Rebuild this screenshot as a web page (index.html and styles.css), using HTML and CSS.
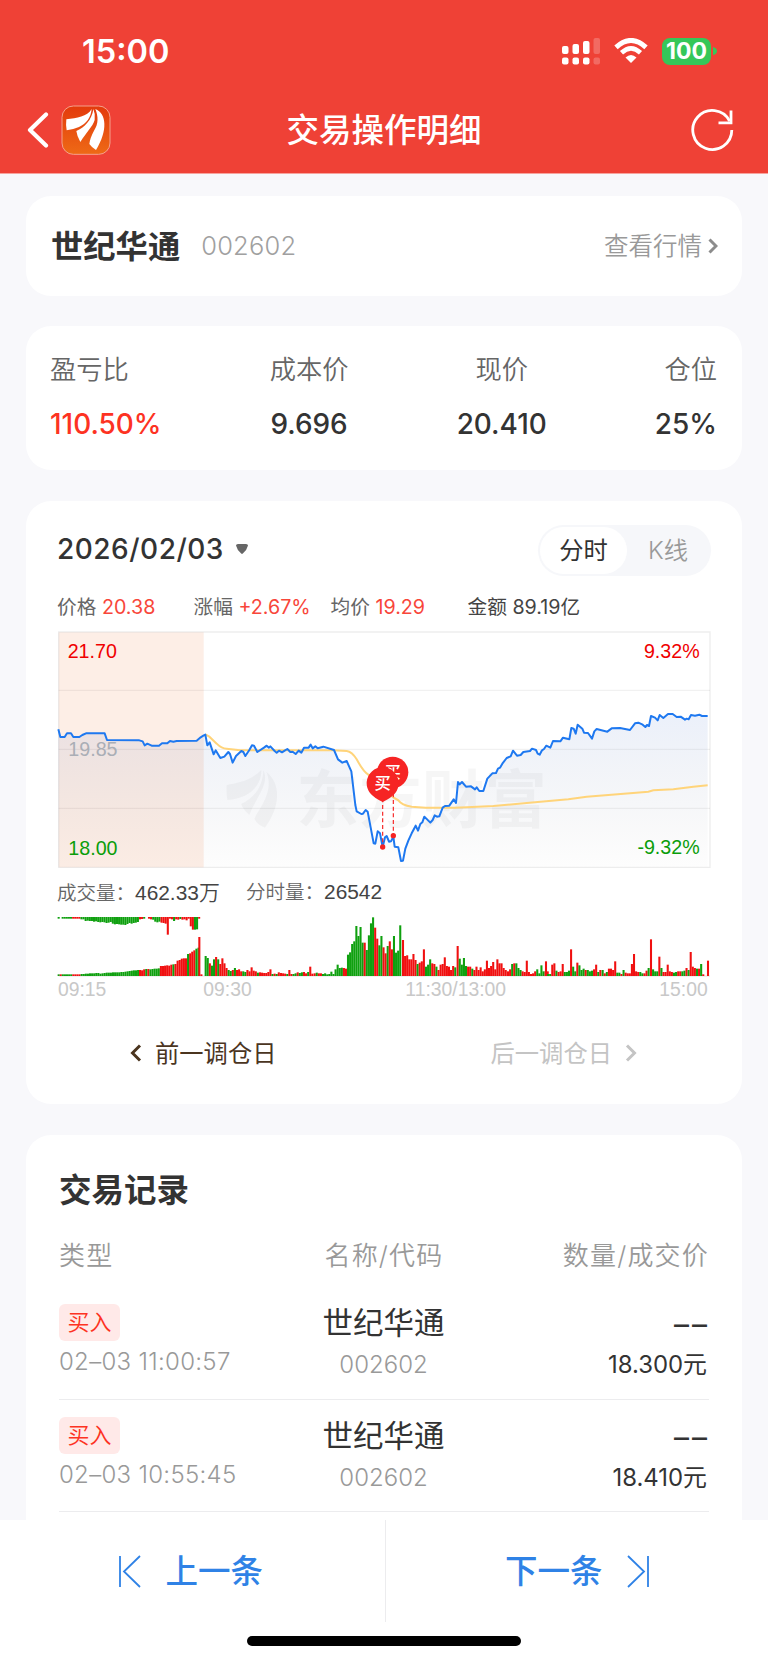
FILE: index.html
```html
<!DOCTYPE html>
<html lang="zh-CN">
<head>
<meta charset="utf-8">
<title>交易操作明细</title>
<link rel="stylesheet" href="styles.css">
</head>

<body>
<div class="header">
	<div class="status">
		<span class="time">15:00</span>
		<svg class="signal" width="39" height="28" viewBox="0 0 39 28" fill="#fff">
			<rect x="0" y="9" width="6.5" height="8" rx="2"/>
			<rect x="10.5" y="7" width="6.5" height="10" rx="2"/>
			<rect x="21" y="4" width="6.5" height="13" rx="2"/>
			<rect x="31.5" y="1" width="6.5" height="16" rx="2" opacity=".22"/>
			<rect x="0" y="20.5" width="6.5" height="7" rx="2"/>
			<rect x="10.5" y="20.5" width="6.5" height="7" rx="2"/>
			<rect x="21" y="20.5" width="6.5" height="7" rx="2"/>
			<rect x="31.5" y="20.5" width="6.5" height="7" rx="2" opacity=".22"/>
		</svg>
		<svg class="wifi" width="34" height="26" viewBox="0 0 34 26">
			<path d="M2 9.3Q17 -4.3 32 9.3" fill="none" stroke="#fff" stroke-width="5"/>
			<path d="M7.5 14.8Q17 6 26.500 14.800" fill="none" stroke="#fff" stroke-width="4.600"/>
			<path d="M11.500 19.500Q17 14.500 22.500 19.500L17 25Z" fill="#fff"/>
		</svg>
		<span class="battery">100</span>
		<svg class="battery-cap" width="4" height="8" viewBox="0 0 4 8"><path d="M0 0Q4 1 4 4T0 8Z" fill="#35c759"/></svg>
	</div>
	<div class="navbar">
		<svg class="back" width="22" height="36" viewBox="0 0 22 36"><path d="M19 2.500L3 18L19 33.500" fill="none" stroke="#fff" stroke-width="4.200" stroke-linecap="round" stroke-linejoin="round"/></svg>
		<svg class="app-icon" width="50" height="50" viewBox="0 0 150 150">
			<defs><linearGradient id="app" x1="0" y1="0" x2="0" y2="1"><stop offset="0" stop-color="#e33a0c"/><stop offset="1" stop-color="#ee6a16"/></linearGradient></defs>
			<rect x="3" y="3" width="144" height="145" rx="34" fill="url(#app)" stroke="#f5a08c" stroke-width="3"/>
			<g fill="#fff">
				<path d="M92 12C78 36 48 38 16 43Q14 60 17 76Q38 73 54 66C76 56 90 38 92 12Z"/>
				<path d="M97 12Q104 28 101 45C95 65 76 82 58 111Q48 94 46 78C70 68 93 45 97 12Z"/>
				<path d="M103 12C137 25 141 77 105 135Q92 127 85 117Q87 99 99 77C113 57 112 34 103 12Z"/>
			</g>
		</svg>
		<h1>交易操作明细</h1>
		<svg class="refresh" width="44" height="44" viewBox="0 0 44 44" fill="none" stroke="#fff" stroke-width="2.800">
			<path d="M41.800 22A19.500 19.500 0 1 1 39.600 13"/>
			<path d="M41 2.500V14.800H28.500"/>
		</svg>
	</div>
</div>

<div class="card stock">
	<h2>世纪华通</h2>
	<span class="code">002602</span>
	<a class="quote">查看行情</a>
	<svg width="10" height="16" viewBox="0 0 10 16"><path d="M1.500 1.500L8 8L1.500 14.500" fill="none" stroke="#8c8c8c" stroke-width="3"/></svg>
</div>

<div class="card summary">
	<div class="item left"><span>盈亏比</span><b class="up">110.50%</b></div>
	<div class="item cost"><span>成本价</span><b>9.696</b></div>
	<div class="item price"><span>现价</span><b>20.410</b></div>
	<div class="item right"><span>仓位</span><b>25%</b></div>
</div>

<div class="card chart">
	<div class="chart-head">
		<span class="date">2026/02/03</span>
		<svg width="14" height="11" viewBox="0 0 14 11"><path d="M1 1.500Q1 0 3 0H11Q13 0 13 1.500Q12 6 7.800 9.500Q7 10.300 6.200 9.500Q2 6 1 1.500Z" fill="#666"/></svg>
		<div class="tabs">
			<span class="tab on">分时</span>
			<span class="tab">K线</span>
		</div>
	</div>
	<div class="info">
		<span>价格 <i>20.38</i></span>
		<span>涨幅 <i>+2.67%</i></span>
		<span>均价 <i>19.29</i></span>
		<span class="dark">金额 89.19亿</span>
	</div>

	<!-- 分时走势 -->
	<svg class="trend" width="654" height="240" viewBox="51 30 1962 720">
		<defs>
			<linearGradient id="fill" x1="0" y1="0" x2="0" y2="1">
				<stop offset="0" stop-color="#3969d2" stop-opacity=".1"/>
				<stop offset="1" stop-color="#444" stop-opacity=".01"/>
			</linearGradient>
		</defs>
		<rect x="56" y="37" width="435" height="705" fill="#fdeee6"/>
		<g class="grid">
			<path d="M56 211H2010M56 388H2010M56 565H2010"/>
			<path class="frame" d="M56 36H2010V742H56Z"/>
		</g>
		<g class="watermark">
			<path d="M560 495C590 488 630 485 664 449C666 490 635 535 562 540Q558 515 560 495Z"/>
			<path d="M670 451C690 490 650 530 628 585Q610 570 603 552C640 535 667 505 670 451Z"/>
			<path d="M679 455C724 490 722 560 675 623Q652 615 643 596C660 560 703 515 679 455Z"/>
			<text x="769" y="605">东方财富</text>
		</g>
		<polygon id="area" fill="url(#fill)"/>
		<path class="avg" d="M496 343L508 350L530 371Q545 386 560 386L600 391H880L920 393Q936 395 950 418Q970 455 985 464L1060 532L1075 541Q1085 555 1115 560Q1180 566 1280 562L1360 558L1460 549L1585 538L1640 530L1770 520L1825 515L1840 511L1900 508L1960 500L2003 496"/>
		<polyline id="line"/>
		<text class="t-red" x="83" y="113">21.70</text>
		<text class="t-gray" x="85" y="407">19.85</text>
		<text class="t-green" x="85" y="704">18.00</text>
		<text class="t-red end" x="1979" y="114">9.32%</text>
		<text class="t-green end" x="1979" y="702">-9.32%</text>
		<!-- 买点 -->
		<g class="buy">
			<path class="dash" d="M1028 535V681M1060 500V647"/>
			<circle cx="1028" cy="681" r="8"/>
			<circle cx="1060" cy="647" r="8"/>
			<circle cx="1058" cy="457" r="47"/>
			<text x="1058" y="474">买</text>
			<path d="M990 519A48 48 0 1 1 1066 519Q1055 533 1028 546Q1001 533 990 519Z"/>
			<text x="1028" y="508">买</text>
		</g>
	</svg>

	<div class="volume-info">
		<span>成交量：<em>462.33万</em></span>
		<span>分时量：<em>26542</em></span>
	</div>

	<!-- 成交量 -->
	<svg class="volume" width="654" height="87" viewBox="51 135 1962 261">
		<path d="M56 318H2010" stroke="#e0e0e0" stroke-width="3"/>
		<g id="bars"></g>
		<text x="54" y="377">09:15</text>
		<text x="490" y="377">09:30</text>
		<text x="1247" y="377" text-anchor="middle">11:30/13:00</text>
		<text x="2003" y="377" text-anchor="end">15:00</text>
	</svg>

	<div class="pager">
		<span class="prev"><svg width="12" height="18" viewBox="0 0 12 18"><path d="M10 1.500L2.500 9L10 16.500" fill="none" stroke="#4b351f" stroke-width="3"/></svg>前一调仓日</span>
		<span class="next">后一调仓日<svg width="12" height="18" viewBox="0 0 12 18"><path d="M2 1.500L9.500 9L2 16.500" fill="none" stroke="#c4c4c4" stroke-width="3"/></svg></span>
	</div>
</div>

<div class="card records">
	<h2>交易记录</h2>
	<div class="row thead">
		<span>类型</span><span>名称/代码</span><span>数量/成交价</span>
	</div>
	<div class="row">
		<div class="col"><span class="badge">买入</span><span class="when">02–03 11:00:57</span></div>
		<div class="col"><span class="name">世纪华通</span><span class="num">002602</span></div>
		<div class="col"><span class="amount">––</span><span class="deal">18.300元</span></div>
	</div>
	<div class="row">
		<div class="col"><span class="badge">买入</span><span class="when">02–03 10:55:45</span></div>
		<div class="col"><span class="name">世纪华通</span><span class="num">002602</span></div>
		<div class="col"><span class="amount">––</span><span class="deal">18.410元</span></div>
	</div>
</div>

<div class="footer">
	<div class="switch">
		<div class="go"><svg width="22" height="33" viewBox="0 0 22 33"><path d="M1 1V32M21 1L5 16.500L21 32" fill="none" stroke="#2f82e6" stroke-width="1.800"/></svg><span>上一条</span></div>
		<div class="go"><span>下一条</span><svg width="22" height="33" viewBox="0 0 22 33"><path d="M21 1V32M1 1L17 16.500L1 32" fill="none" stroke="#2f82e6" stroke-width="1.800"/></svg></div>
	</div>
	<div class="home"></div>
</div>
<script src="chart.js"></script>
</body>
</html>
```
FILE: styles.css
```css
*{box-sizing: border-box;}
body{
	margin: 0;
	height: 1663px;
	overflow: hidden;
	display: flex;
	flex-direction: column;
	background-color: #f8f8fb;
	color: #333;
	font-family: Inter, "Noto Sans CJK SC", sans-serif;
}
h1, h2{margin: 0;}
svg{display: block; flex: none;}
span, a, b, h1, h2{white-space: nowrap;}
i, em{font-style: normal;}

/* 顶部 */
.header{
	flex: none;
	height: 174px;
	background-color: #ef4136;
	border-bottom: 1px solid #f7a39d;
	color: #fff;
}
.status{
	display: flex;
	align-items: center;
	height: 102px;
	padding: 0 51px 0 82px;
}
.time{
	font-size: 32.500px;
	font-weight: 600;
	margin-right: auto;
}
.wifi{margin: 0 14px 0 13px;}
.battery{
	width: 49px;
	height: 27px;
	border-radius: 8px;
	background-color: #35c759;
	font-size: 23px;
	font-weight: 700;
	line-height: 27px;
	text-align: center;
}
.battery-cap{margin-left: 2px;}
.navbar{
	display: flex;
	align-items: center;
	height: 56px;
	padding: 0 34px 0 27px;
}
.app-icon{margin-left: 12px;}
.navbar h1{
	flex: 1;
	padding: 0 33px 5px 0;
	text-align: center;
	font-size: 32.500px;
	font-weight: 500;
}

/* 卡片 */
.card{
	flex: none;
	margin: 0 26px 30px;
	border-radius: 25px;
	background-color: #fff;
}
.stock{
	display: flex;
	align-items: center;
	height: 100px;
	margin-top: 22px;
	padding: 0 24px 0 25px;
}
.stock h2{
	padding-bottom: 5px;
	font-size: 32.300px;
	font-weight: 600;
}
.code{
	margin-left: 21px;
	padding-bottom: 2px;
	font-size: 25.500px;
	letter-spacing: .200px;
	color: #a0a0a0;
	font-weight: 350;
}
.quote{
	margin-left: auto;
	margin-right: 6px;
	padding-bottom: 3px;
	font-size: 24.500px;
	font-weight: 350;
	color: #999;
}
.summary{
	display: flex;
	justify-content: space-between;
	height: 144px;
	margin-bottom: 31px;
	padding: 24px 25px 0 24px;
}
.item{
	display: flex;
	flex-direction: column;
	align-items: center;
}
.item span{
	font-size: 26.300px;
	line-height: 40px;
	font-weight: 350;
	color: #666;
}
.item b{
	margin-top: 16px;
	font-size: 27.900px;
	font-weight: 500;
	line-height: 36px;
}
.item .up{color: #fd3222;}
.left{align-items: flex-start;}
.right{align-items: flex-end;}

/* 走势图 */
.chart{
	height: 603px;
	margin-bottom: 31px;
	padding: 24px 31px 0;
}
.chart-head{
	display: flex;
	align-items: center;
	height: 51px;
}
.date{
	font-size: 28px;
	font-weight: 500;
	letter-spacing: .5px;
	margin-right: 11px;
	padding-bottom: 3px;
}
.chart-head svg{margin-bottom: 3px;}
.tabs{
	display: flex;
	width: 173px;
	height: 51px;
	margin-left: auto;
	padding: 2px;
	border-radius: 26px;
	background-color: #f6f7fa;
}
.tab{
	flex: 1;
	font-size: 24.300px;
	line-height: 47px;
	font-weight: 350;
	text-align: center;
	color: #999;
}
.tab.on{
	flex: none;
	width: 87px;
	border-radius: 24px;
	background-color: #fff;
	font-weight: 400;
	color: #333;
}
.info{
	display: grid;
	grid-template-columns: 136.500px 137px 137px 1fr;
	margin-top: 16px;
	font-size: 19.700px;
	line-height: 30px;
	color: #666;
}
.info i{color: #f8463a;}
.info .dark{color: #444;}
.trend{margin-top: 8px;}
#line{
	fill: none;
	stroke: #1e78f0;
	stroke-width: 6;
	stroke-linejoin: round;
}
.avg{
	fill: none;
	stroke: #ffd47a;
	stroke-width: 6;
}
.grid{
	fill: none;
	stroke: #000;
	stroke-opacity: .07;
	stroke-width: 3;
}
.frame{stroke-width: 4;}
.watermark{fill: #000; fill-opacity: .035;}
.watermark text{
	font: 700 188px "Noto Sans CJK SC", sans-serif;
}
.trend text{font-family: "Liberation Sans", "Noto Sans CJK SC", sans-serif; font-size: 59px;}
.trend .watermark text{font-size: 188px;}
.t-red{fill: #f00000;}
.t-gray{fill: #aaaeb6;}
.t-green{fill: #0a9d0a;}
.end{text-anchor: end;}
.buy{fill: #f62424;}
.dash{stroke: #f62424; stroke-width: 3.500; stroke-dasharray: 12 8;}
.trend .buy text{
	fill: #fff;
	font-size: 49px;
	font-weight: 500;
	text-anchor: middle;
}
.volume-info{
	display: flex;
	height: 45px;
	align-items: center;
	padding-bottom: 4px;
	font-family: "Liberation Sans", "Noto Sans CJK SC", sans-serif;
	font-size: 19.500px;
	font-weight: 350;
	color: #666;
}
.volume-info span{width: 189px;}
.volume-info em{font-size: 20.900px; color: #444;}
.volume text{
	font-family: "Liberation Sans", sans-serif;
	font-size: 58px;
	fill: #c8c8c8;
}
.pager{
	display: flex;
	justify-content: space-between;
	margin-top: 33px;
	padding: 0 74px 0 73px;
	font-size: 24.300px;
	line-height: 36px;
}
.pager span{
	display: flex;
	align-items: center;
	gap: 13px;
}
.prev{color: #4b351f;}
.next{color: #c4c4c4;}

/* 交易记录 */
.records{
	height: 460px;
	margin-bottom: 0;
	padding: 30px 33px 0;
}
.records h2{
	padding-top: 3px;
	font-size: 32.500px;
	line-height: 45px;
	font-weight: 600;
}
.row{
	display: grid;
	grid-template-columns: 216px 218px 216px;
	height: 112.500px;
	padding-top: 17px;
	border-bottom: 1.500px solid #ececee;
}
.thead{
	height: 74px;
	padding: 23px 1px 0 0;
	border: 0;
	font-size: 26px;
	line-height: 40px;
	font-weight: 350;
	letter-spacing: 1.200px;
	color: #999;
}
.thead span:nth-child(2){text-align: center;}
.thead span:nth-child(3){text-align: right;}
.col{
	display: flex;
	flex-direction: column;
	align-items: flex-start;
}
.col:nth-child(2){align-items: center; padding-right: 1px;}
.col:nth-child(3){align-items: flex-end; padding-right: 2px;}
.badge{
	width: 61px;
	height: 37px;
	border-radius: 6px;
	background-color: #ffe9e8;
	font-size: 22px;
	line-height: 36px;
	font-weight: 350;
	text-align: center;
	color: #fd3222;
}
.when, .num{
	font-size: 24px;
	line-height: 30px;
	font-weight: 350;
	color: #999;
}
.when{margin-top: 6px; letter-spacing: .300px;}
.name{
	font-size: 30.500px;
	line-height: 38px;
}
.num{margin-top: 8px;}
.amount{
	margin-right: -3px;
	font-size: 30px;
	line-height: 40px;
	letter-spacing: 3px;
}
.deal{
	margin-top: 6px;
	font-size: 23.900px;
	line-height: 30px;
}

/* 底部 */
.footer{
	position: fixed;
	left: 0;
	right: 0;
	bottom: 0;
	height: 143px;
	background-color: #fff;
}
.switch{display: flex; height: 102px;}
.go{
	flex: 1;
	display: flex;
	align-items: center;
	justify-content: center;
	gap: 24px;
	font-size: 32.500px;
	font-weight: 500;
	color: #2f82e6;
}
.go span{padding-bottom: 5px;}
.go:first-child{border-right: 1px solid #ececee; padding-right: 2px;}
.go:last-child{padding-left: 0;}
.home{
	width: 274px;
	height: 10px;
	margin: 14px auto 0;
	border-radius: 5px;
	background-color: #000;
}
```
FILE: chart.js
```js
// 价格线坐标
var points = "55,328 61,351 74,351 81,340 93,340 100,351 118,351 127,345 138,340 194,340 201,360 298,361 308,364 314,376 322,371 335,377 357,377 366,370 382,370 390,363 400,365 410,363 470,362 482,352 490,347 496,344 502,376 509,367 521,403 527,391 541,414 553,410 565,396 570,402 578,428 588,408 604,393 610,396 616,408 628,390 636,376 642,377 652,396 672,383 680,377 687,383 691,379 704,393 710,398 717,392 726,397 734,392 742,387 751,396 758,395 767,402 776,392 784,398 792,383 806,383 812,374 818,385 826,379 833,385 850,380 882,390 894,418 907,428 920,423 934,454 946,555 950,574 964,582 969,581 977,570 983,575 1001,670 1006,671 1013,634 1020,640 1028,681 1035,652 1040,648 1047,665 1053,664 1060,650 1064,680 1075,682 1083,723 1089,722 1096,686 1105,662 1115,640 1127,617 1134,632 1141,612 1147,607 1153,590 1171,608 1178,600 1184,586 1191,590 1198,589 1208,563 1215,558 1228,557 1241,538 1248,549 1254,486 1259,493 1266,486 1278,500 1293,499 1305,508 1310,502 1318,513 1330,513 1342,476 1357,460 1368,459 1374,446 1380,443 1387,431 1400,414 1412,409 1419,392 1431,407 1442,405 1450,396 1470,393 1476,386 1488,390 1493,401 1499,404 1506,391 1512,387 1519,377 1531,383 1539,363 1561,364 1569,353 1588,358 1594,324 1601,326 1607,341 1613,314 1627,326 1632,338 1644,339 1656,356 1663,334 1670,327 1702,335 1715,325 1740,324 1770,330 1785,310 1795,308 1808,314 1816,321 1821,315 1827,318 1833,288 1845,293 1853,301 1859,285 1870,294 1884,282 1898,282 1910,291 1922,290 1935,299 1940,296 1946,298 1953,285 1965,287 1978,284 1986,288 2003,288";

document.getElementById("line").setAttribute("points", points);
document.getElementById("area").setAttribute("points", "55,742 " + points + " 2003,742");

var step = 6.27;
var base = 318;
var bars = document.getElementById("bars");

// 每行: 起点x, 颜色+高度
var volume = [
	[56, "g5 r5 g5 g5 g5 g5 g5 r5 r5 r5 r5 g6 g6 g7 g7 g8 g8 g8 g9 g9 g7 g8 g9 g10 g10 g10 g11 g11 g11 g11 g12 g12 g13 g14 g15 g16 g17 g17 g18"],
	[300, "r18 r17 r20 g21 r21 g20 g21 g22 g22 g23 r30 r30 r31 r32 r31 r34 g35 r36 r46 r48 r52 r53 r53 g66 r68 r73 r77 g82 g85"],
	[478, "r117 r5"],
	[497, "g60 g54 r38 g31 g50 r57 g50 r36 r53 r38 r24 g18 g15 r18 g24"],
	[591, "r18 r20 r14 g14 g12 r18 r14 r26 r16 r14 g10 r11 r10 r9 r9 r12 r20 g6 r7 g6 r11"],
	[723, "r9 r8 r7 g6 r18 r6 g6 g8 r11 g9 g11 r12 r8 g12 r28 r7"],
	[824, "r8 g10 r8 r8 g6 g8 g5 g6 g13 g6 g20 g34 g24 g25 r24 r22"],
	[924, "g64 g71 g96 g104 g150 g120 g147 g100 r100 g78 g122 g158 g176 r145 r112 g92 g120 r86 r68 g90 r104 r80 g120 g70 g76 g152"],
	[1089, "r108 r60 r62 r50 r50 r66 r48 g36 r40 r44 r80 g28 g34 g50 r38 r36 g28 r18 r34 r36 r56 r30 r28 r18 r30 g26"],
	[1253, "r90 g52 g34 g54 g30 r28 r28 g22 r18 r28 r18 r26 r14 r20 r46 r24 r30 r42 r20 r50 r38 r38 r24 r18"],
	[1404, "r14 r20 g36 r38 g38 g24 g18 r14 r12 r46 r12 r6 r8 r14 g20 g8 g32 g14 r14 r14"],
	[1518, "r44 g6 g6 r34 r38 g16 r12 r14 r36 g12 g12 g16 r80 g28 g14 r40 g32 g18 g22 r18 g18 g14 g16 r20 r34 g12 r18"],
	[1688, "g18 r8 g12 r22 r22 r18 r44 g10 g10 r6 g18 r10 r8 r8 r36 r66 r14 r12 g12 g8 r8 r16 g24"],
	[1833, "r110 g20 g14 g14 r58 g24 r12 r12 r34 r14 r12 g10 g12 r14 r14 g14 g16 r24 g18 r72 r28 r24 g22 r22 g36 r5"],
	[2004, "r46"]
];

// 竞价未匹配量, 从上往下画
var auction = [
	[56, "g5"],
	[68, "g5 g5 g5 g5 g5 r5 r5 r5 r5 g7 g7 g12 g11 g12 g12 g14 g13 g15 g16 g15 g16 g18 g17 g15 g20 g22 g21 g22 g23 g23 g24 g21 g18 g20 g18 g17 g15 r7 r6 g5"],
	[327, "r5 r7 g8 g14 g16 g14 r17 r18 r20 r53 r5 r7 g12 r7 r8 g6 r8 r7 r10 r5 r28 r38 g38 g37 r5"]
];

function bar(x, y, h, color){
	var rect = document.createElementNS("http://www.w3.org/2000/svg", "rect");
	rect.setAttribute("x", x - 3.1);
	rect.setAttribute("y", y);
	rect.setAttribute("width", 6.2);
	rect.setAttribute("height", h);
	rect.setAttribute("fill", color == "r" ? "#f01010" : "#0fa00f");
	bars.appendChild(rect);
}

function draw(rows, down){
	rows.forEach(function(row){
		row[1].split(" ").forEach(function(item, i){
			var h = +item.slice(1);
			bar(row[0] + i * step, down ? 141 : base - h, h, item[0]);
		});
	});
}

draw(volume, false);
draw(auction, true);
```
